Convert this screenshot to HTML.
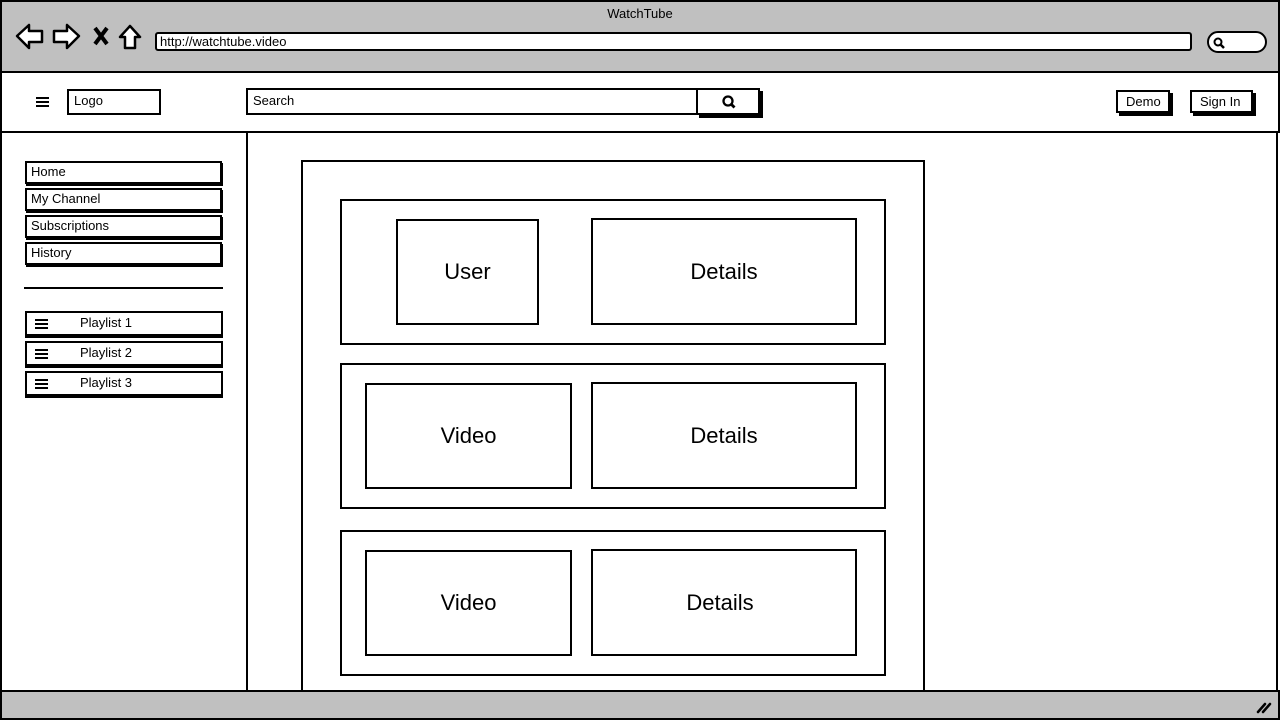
<!DOCTYPE html>
<html><head><meta charset="utf-8"><style>
*{box-sizing:border-box;margin:0;padding:0}
body{width:1280px;height:720px;position:relative;overflow:hidden;background:#fff;font-family:"Liberation Sans",sans-serif;color:#000}
.a{position:absolute}
.b{position:absolute;border:2px solid #000;background:#fff}
.t{font-size:13px;line-height:1}
.sh{box-shadow:3px 3px 0 #000}
.big{display:flex;align-items:center;justify-content:center;font-size:22px}
.ham{position:absolute;width:13px;height:10px;border-top:2px solid #000;border-bottom:2px solid #000}
.ham:after{content:"";position:absolute;left:0;right:0;top:2px;height:2px;background:#000}
</style></head><body>
<div class="a" style="left:0;top:0;width:1280px;height:73px;background:#c0c0c0;border:2px solid #000;border-bottom:2px solid #000"></div>
<div class="a t" style="left:0;width:1280px;top:7px;text-align:center">WatchTube</div>
<svg class="a" style="left:14px;top:22px" width="135" height="30" viewBox="0 0 135 30">
<path d="M3 14 L15 3 L15 9 L28 9 L28 20 L15 20 L15 26 Z" fill="#fff" stroke="#000" stroke-width="2.5" stroke-linejoin="round"/>
<path d="M65 14 L53 3 L53 9 L40 9 L40 20 L53 20 L53 26 Z" fill="#fff" stroke="#000" stroke-width="2.5" stroke-linejoin="round"/>
<path d="M81 6 L93 22 M93 6 L81 22" stroke="#000" stroke-width="4"/>
<path d="M106 15 L116 4 L126 15 L121 15 L121 26 L111 26 L111 15 Z" fill="#fff" stroke="#000" stroke-width="2.5" stroke-linejoin="round"/>
</svg>
<div class="b" style="left:155px;top:32px;width:1037px;height:19px;border-radius:3px"></div>
<div class="a t" style="left:160px;top:35px">http://watchtube.video</div>
<div class="b" style="left:1207px;top:31px;width:60px;height:22px;border-radius:11px"></div>
<svg class="a" style="left:1212px;top:36px" width="14" height="14"><circle cx="6" cy="6" r="3.5" fill="none" stroke="#000" stroke-width="2"/><path d="M8.5 8.5 L12 12" stroke="#000" stroke-width="2.5"/></svg>
<div class="a" style="left:0;top:71px;width:1280px;height:62px;border:2px solid #000;border-top:none"></div>
<div class="ham" style="left:36px;top:97px"></div>
<div class="b" style="left:67px;top:89px;width:94px;height:26px"></div>
<div class="a t" style="left:74px;top:94px">Logo</div>
<div class="b" style="left:246px;top:88px;width:452px;height:27px"></div>
<div class="a t" style="left:253px;top:94px">Search</div>
<div class="b sh" style="left:696px;top:88px;width:64px;height:27px"></div>
<svg class="a" style="left:720px;top:94px" width="18" height="16"><circle cx="8" cy="7" r="4.5" fill="none" stroke="#000" stroke-width="2.3"/><path d="M11 10 L14.5 13.5" stroke="#000" stroke-width="2.8"/></svg>
<div class="b sh" style="left:1116px;top:90px;width:54px;height:23px"></div>
<div class="a t" style="left:1126px;top:95px">Demo</div>
<div class="b sh" style="left:1190px;top:90px;width:63px;height:23px"></div>
<div class="a t" style="left:1200px;top:95px">Sign In</div>
<div class="a" style="left:0;top:131px;width:248px;height:562px;border:2px solid #000;border-top:none"></div>
<div class="a" style="left:1276px;top:131px;width:2px;height:562px;background:#000"></div>
<div class="b sh" style="left:25px;top:161px;width:197px;height:23px;box-shadow:1px 2px 0 #000"></div><div class="a t" style="left:31px;top:165px">Home</div>
<div class="b" style="left:25px;top:188px;width:197px;height:23px;box-shadow:1px 2px 0 #000"></div><div class="a t" style="left:31px;top:192px">My Channel</div>
<div class="b" style="left:25px;top:215px;width:197px;height:23px;box-shadow:1px 2px 0 #000"></div><div class="a t" style="left:31px;top:219px">Subscriptions</div>
<div class="b" style="left:25px;top:242px;width:197px;height:23px;box-shadow:1px 2px 0 #000"></div><div class="a t" style="left:31px;top:246px">History</div>
<div class="a" style="left:24px;top:287px;width:199px;height:2px;background:#000"></div>
<div class="b" style="left:25px;top:311px;width:198px;height:25px;box-shadow:0 2px 0 #000"></div><div class="ham" style="left:35px;top:319px"></div><div class="a t" style="left:80px;top:316px">Playlist 1</div>
<div class="b" style="left:25px;top:341px;width:198px;height:25px;box-shadow:0 2px 0 #000"></div><div class="ham" style="left:35px;top:349px"></div><div class="a t" style="left:80px;top:346px">Playlist 2</div>
<div class="b" style="left:25px;top:371px;width:198px;height:25px;box-shadow:0 2px 0 #000"></div><div class="ham" style="left:35px;top:379px"></div><div class="a t" style="left:80px;top:376px">Playlist 3</div>
<div class="b" style="left:301px;top:160px;width:624px;height:545px"></div>
<div class="b" style="left:340px;top:199px;width:546px;height:146px"></div>
<div class="b big" style="left:396px;top:219px;width:143px;height:106px">User</div>
<div class="b big" style="left:591px;top:218px;width:266px;height:107px">Details</div>
<div class="b" style="left:340px;top:363px;width:546px;height:146px"></div>
<div class="b big" style="left:365px;top:383px;width:207px;height:106px">Video</div>
<div class="b big" style="left:591px;top:382px;width:266px;height:107px">Details</div>
<div class="b" style="left:340px;top:530px;width:546px;height:146px"></div>
<div class="b big" style="left:365px;top:550px;width:207px;height:106px">Video</div>
<div class="b big" style="left:591px;top:549px;width:266px;height:107px;padding-right:8px">Details</div>
<div class="a" style="left:0;top:690px;width:1280px;height:30px;background:#c0c0c0;border:2px solid #000"></div>
<svg class="a" style="left:1256px;top:700px" width="16" height="14"><path d="M2 12 L9 4 M7 12 L14 4" stroke="#000" stroke-width="2.5" stroke-linecap="round"/></svg>
</body></html>
